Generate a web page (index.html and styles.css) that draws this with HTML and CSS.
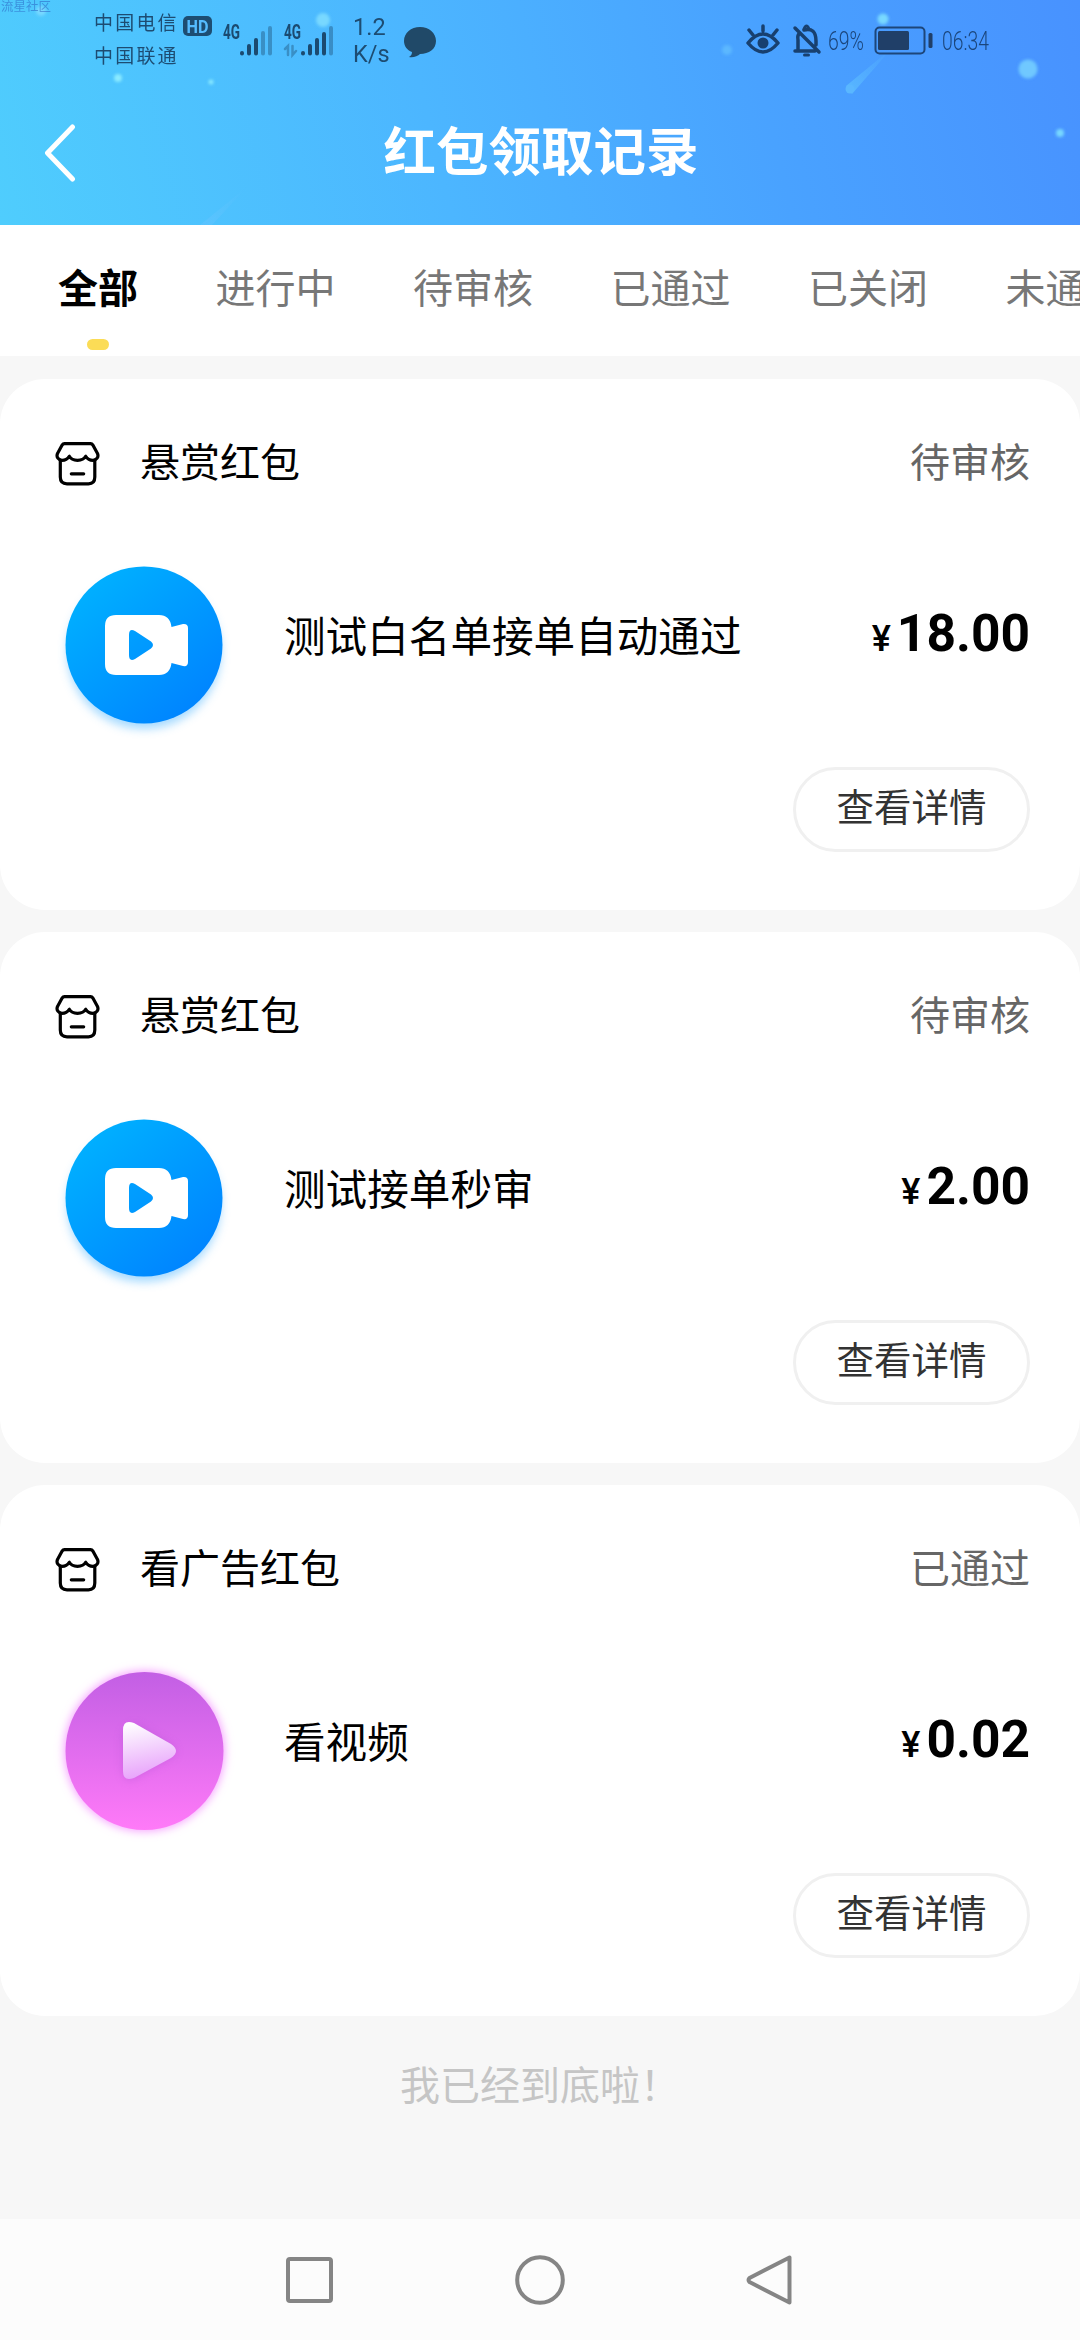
FILE: index.html
```html
<!DOCTYPE html>
<html lang="zh-CN">
<head>
<meta charset="utf-8">
<title>红包领取记录</title>
<link rel="stylesheet" href="styles.css">
</head>
<body>
<svg class="defs" width="0" height="0" aria-hidden="true">
  <defs>
    <linearGradient id="blue" x1="0.15" y1="0.1" x2="0.85" y2="0.9"><stop offset="0" stop-color="#00b0ff"/><stop offset="1" stop-color="#0084ff"/></linearGradient>
    <linearGradient id="pink" x1="0" y1="0" x2="0" y2="1"><stop offset="0" stop-color="#c25fe4"/><stop offset="1" stop-color="#ff7af8"/></linearGradient>
    <linearGradient id="play" x1="0.2" y1="0" x2="0.4" y2="1"><stop offset="0" stop-color="#fff"/><stop offset="1" stop-color="#e7a0fb"/></linearGradient>
    <filter id="soft" x="-30%" y="-30%" width="160%" height="160%"><feGaussianBlur stdDeviation="5"/></filter>
    <symbol id="shop" viewBox="0 0 44 44">
      <g fill="none" stroke="#000" stroke-width="3.2" stroke-linejoin="round" stroke-linecap="round">
        <path d="M9 1.600H35C36.500 1.600 37 2.500 37.500 3.300L42 11.500C43.500 15 41 18.300 37.500 18.300C34 18.300 32 17 30.200 14.300C28.500 17.300 25.500 18.300 22 18.300C18.500 18.300 15.500 17.300 13.800 14.300C12 17 10 18.300 6.500 18.300C3 18.300.5 15 2 11.500L6.500 3.300C7 2.500 7.500 1.600 9 1.600Z"/>
        <path d="M4.800 18V35C4.800 39.500 7.500 41.800 11.500 41.800H33C37 41.800 39.300 39.500 39.300 35V18M15.800 31.800H28.200"/>
      </g>
    </symbol>
    <symbol id="camera" viewBox="0 0 190 190">
      <circle cx="95" cy="100" r="77" fill="#4db5ff" opacity=".5" filter="url(#soft)"/>
      <circle cx="95" cy="93" r="78.500" fill="url(#blue)"/>
      <path fill="#fff" fill-rule="evenodd" d="M67 63H110Q121 63 122.500 75L134 72Q139 71.500 139 76V110Q139 115 134 114L122.500 111Q121 123 110 123H67Q56 123 56 112V74Q56 63 67 63ZM80 83V103Q80 110 86 107L102 96.500Q106 93 102 89.500L86 79Q80 76 80 83Z"/>
    </symbol>
    <symbol id="video" viewBox="0 0 190 190">
      <circle cx="95.500" cy="93" r="80" fill="#f69cff" filter="url(#soft)"/>
      <circle cx="95.500" cy="93" r="79" fill="url(#pink)"/>
      <path d="M74 74V112Q76 126 86 120L122 99Q130 93 122 87L86 66" fill="#a04bc8" opacity=".35" filter="url(#soft)"/>
      <path d="M74 72Q74 61 85 65L122 86Q132 93 122 100L85 120Q74 124 74 113Z" fill="url(#play)"/>
    </symbol>
  </defs>
</svg>
<div class="screen">
  <header class="header">
    <svg class="sparkles" viewBox="0 0 1080 225" aria-hidden="true">
      <defs>
        <linearGradient id="streak" x1="0" y1="1" x2="1" y2="0"><stop offset="0" stop-color="#60c4ff" stop-opacity=".7"/><stop offset="1" stop-color="#60c4ff" stop-opacity="0"/></linearGradient>
        <filter id="glow" x="-100%" y="-100%" width="300%" height="300%"><feGaussianBlur stdDeviation="1.500"/></filter>
      </defs>
      <g fill="#78d8ff" filter="url(#glow)">
        <circle cx="41" cy="11" r="5"/><circle cx="118" cy="78" r="4" fill="#8aeaff"/><circle cx="211" cy="82" r="2.500" fill="#8aeaff"/>
        <circle cx="323" cy="20" r="7"/><circle cx="883" cy="19" r="5.500"/><circle cx="727" cy="50" r="5" opacity=".4"/>
        <circle cx="1028" cy="69" r="9.500" fill="#6fc8ff"/><circle cx="1060" cy="133" r="4"/>
      </g>
      <path d="M846 86L892 48L852 94Z" fill="url(#streak)"/><circle cx="850" cy="89" r="4.500" fill="#5ab7ff"/>
      <path d="M200 225L248 186L212 225Z" fill="url(#streak)"/>
    </svg>
    <span class="watermark">流星社区</span>
    <div class="statusbar">
      <div class="carriers"><span>中国电信</span><span>中国联通</span></div>
      <svg class="network" width="156" height="50" viewBox="0 0 156 50">
        <rect x="0" y="5" width="29" height="20" rx="5" fill="#1d4d72"/>
        <text x="3.500" y="21.500" class="hd" textLength="22" lengthAdjust="spacingAndGlyphs">HD</text>
        <text x="40" y="28" class="gen" textLength="17" lengthAdjust="spacingAndGlyphs">4G</text>
        <text x="101" y="28" class="gen" textLength="17" lengthAdjust="spacingAndGlyphs">4G</text>
        <g stroke-width="4" stroke-linecap="round" stroke="#1b4a70">
          <path d="M59 42V42.500M66 35V42.500M73 29V42.500M120 42V42.500M127 35V42.500M134 29V42.500M141 23V42.500"/>
          <path stroke-opacity=".4" d="M80 22V42.500M87 17V42.500M148 17V42.500"/>
          <path stroke-width="2.500" fill="none" stroke-opacity=".4" d="M102 38L105 35V44M109.500 35V44L113 40"/>
        </g>
      </svg>
      <div class="speed"><span>1.2</span><span>K/s</span></div>
      <svg class="bubble" width="32" height="31" viewBox="0 0 32 31"><path fill="#204968" d="M16 0C25 0 32 6 32 14C32 22 25 27 16 27C14 29 9 31 5 30C7 29 8 27 8 25C3 23 0 19 0 14C0 6 7 0 16 0Z"/></svg>
      <svg class="system" width="248" height="34" viewBox="0 0 248 34">
        <g fill="none" stroke="#18406f" stroke-width="3.500" stroke-linecap="round" stroke-linejoin="round">
          <path d="M2 20Q17 2 32 20Q17 38 2 20ZM17 8V3M7 12L3 7M27 12L31 7"/><circle cx="17" cy="20" r="5.500" fill="#18406f" stroke="none"/>
          <path d="M49 5L73 29M49 28H69M52 26V17Q51 12 54 10M58 7Q70 4 70 18V22"/><path d="M58 6Q60.500 0 63 6" stroke-width="3"/><path d="M58.500 32H62.500" stroke-width="3"/>
        </g>
        <text x="82" y="27" class="hand" textLength="36" lengthAdjust="spacingAndGlyphs">69%</text>
        <rect x="129.500" y="4.500" width="49" height="26" rx="4" fill="none" stroke="#1d467a" stroke-width="2"/>
        <rect x="132" y="8" width="31" height="19" rx="1.500" fill="#203f68"/>
        <rect x="182.500" y="10" width="4" height="15" rx="1.500" fill="#203f68"/>
        <text x="196" y="27" class="hand" textLength="47" lengthAdjust="spacingAndGlyphs">06:34</text>
      </svg>
    </div>
    <div class="titlebar">
      <svg class="back" width="32" height="60" viewBox="0 0 32 60"><path d="M28.500 4L3.500 30L28.500 56" fill="none" stroke="#fff" stroke-width="5" stroke-linecap="round" stroke-linejoin="round"/></svg>
      <h1>红包领取记录</h1>
    </div>
  </header>

  <nav class="tabs">
    <a class="tab active">全部</a><a class="tab">进行中</a><a class="tab">待审核</a><a class="tab">已通过</a><a class="tab">已关闭</a><a class="tab">未通过</a>
  </nav>

  <main class="list">
    <section class="card">
      <div class="card-head"><svg class="shop"><use href="#shop"/></svg><h2>悬赏红包</h2><span class="state">待审核</span></div>
      <div class="card-body"><svg class="thumb"><use href="#camera"/></svg><p>测试白名单接单自动通过</p><div class="price"><span>¥</span>18.00</div></div>
      <button class="detail">查看详情</button>
    </section>
    <section class="card">
      <div class="card-head"><svg class="shop"><use href="#shop"/></svg><h2>悬赏红包</h2><span class="state">待审核</span></div>
      <div class="card-body"><svg class="thumb"><use href="#camera"/></svg><p>测试接单秒审</p><div class="price"><span>¥</span>2.00</div></div>
      <button class="detail">查看详情</button>
    </section>
    <section class="card">
      <div class="card-head"><svg class="shop"><use href="#shop"/></svg><h2>看广告红包</h2><span class="state">已通过</span></div>
      <div class="card-body"><svg class="thumb"><use href="#video"/></svg><p>看视频</p><div class="price"><span>¥</span>0.02</div></div>
      <button class="detail">查看详情</button>
    </section>
    <p class="end">我已经到底啦！</p>
  </main>

  <footer class="navbar">
    <svg width="52" height="52" viewBox="0 0 52 52"><rect x="4" y="5" width="43" height="42" rx="2"/></svg>
    <svg width="52" height="52" viewBox="0 0 52 52"><circle cx="26" cy="26" r="22.800"/></svg>
    <svg width="52" height="52" viewBox="0 0 52 52"><path d="M45.500 3.500V48.500L5.500 28Q3.500 26 5.500 24Z"/></svg>
  </footer>
</div>
</body>
</html>
```
FILE: styles.css
```css
* { box-sizing: border-box; }
body {
  margin: 0;
  font-family: Roboto, "Noto Sans CJK SC", sans-serif;
  color: #000;
  background: #f7f7f7;
}
h1, h2, p { margin: 0; font-weight: 400; }
.defs { position: absolute; }
.screen {
  width: 1080px;
  height: 2340px;
  display: flex;
  flex-direction: column;
  overflow: hidden;
}

/* header */
.header {
  position: relative;
  height: 225px;
  flex: none;
  background: linear-gradient(76deg, #4fcdfd 0%, #4cb6ff 40%, #49a2ff 70%, #4892ff 100%);
}
.sparkles { position: absolute; inset: 0; width: 1080px; height: 225px; }
.watermark {
  position: absolute;
  left: 1px;
  top: -1px;
  font-size: 12.5px;
  line-height: 15px;
  color: rgba(40, 90, 190, .5);
}
.statusbar {
  position: relative;
  height: 80px;
  display: flex;
  align-items: flex-start;
  padding: 7px 86px 0 94px;
  color: #1d4c72;
}
.carriers {
  width: 89px;
  display: flex;
  flex-direction: column;
  font-size: 19px;
  font-weight: 400;
  letter-spacing: 2.2px;
  line-height: 33px;
}
.network { margin-top: 4px; }
.hd { font: 700 18px Roboto, sans-serif; fill: #55bcff; }
.gen { font: 700 20px Roboto, sans-serif; fill: #1b4a70; }
.hand { font: 300 26px Roboto, sans-serif; fill: #1b467c; }
.speed {
  width: 51px;
  margin-left: 14px;
  display: flex;
  flex-direction: column;
  font-size: 23.5px;
  line-height: 27px;
  padding-top: 7px;
}
.bubble { margin-top: 20px; }
.system { margin-top: 16px; margin-left: auto; }
.titlebar {
  position: relative;
  height: 145px;
  display: flex;
  align-items: center;
  padding-left: 44px;
}
h1 {
  flex: 1;
  margin-right: 74px;
  text-align: center;
  font-size: 52.5px;
  line-height: 60px;
  font-weight: 700;
  color: #fff;
}

/* tabs */
.tabs {
  height: 131px;
  flex: none;
  display: flex;
  gap: 77.500px;
  padding: 35px 0 0 58px;
  background: #fff;
  white-space: nowrap;
}
.tab {
  flex: none;
  display: flex;
  flex-direction: column;
  align-items: center;
  font-size: 40px;
  line-height: 60px;
  color: #777;
}
.tab.active { font-weight: 700; color: #000; }
.tab.active::after {
  content: "";
  width: 22px;
  height: 11px;
  margin-top: 19px;
  border-radius: 6px;
  background: #fbdc56;
}

/* cards */
.list {
  flex: 1;
  display: flex;
  flex-direction: column;
  gap: 22px;
  padding-top: 23px;
}
.card {
  height: 531px;
  flex: none;
  padding: 55px 50px 0 55px;
  border-radius: 45px;
  background: #fff;
  display: flex;
  flex-direction: column;
}
.card-head { display: flex; align-items: center; height: 60px; }
.shop { width: 45px; height: 44px; }
h2 { margin-left: 40px; font-size: 40px; line-height: 60px; }
.state { margin-left: auto; font-size: 40px; line-height: 60px; color: #666; }
.card-body { display: flex; height: 190px; margin-top: 58px; }
.thumb { width: 190px; height: 190px; margin-left: -6px; }
.card-body p { margin-left: 45px; padding-top: 56px; font-size: 41.600px; line-height: 60px; }
.price {
  margin-left: auto;
  padding-top: 52px;
  font-size: 51.500px;
  line-height: 60px;
  font-weight: 700;
}
.price span { font-size: 36px; font-weight: 500; margin-right: 6px; }
.detail {
  align-self: flex-end;
  width: 237px;
  height: 85px;
  margin-top: 25px;
  padding: 0 0 4px;
  border: 3px solid #f0f0f0;
  border-radius: 43px;
  background: #fff;
  color: #333;
  font-family: inherit;
  font-size: 37.500px;
  line-height: 50px;
}
.end {
  margin-top: 19px;
  text-align: center;
  font-size: 40px;
  line-height: 60px;
  color: #c5c5c5;
}

/* system navigation */
.navbar {
  flex: none;
  height: 121px;
  display: flex;
  justify-content: center;
  align-items: center;
  gap: 178px;
  background: #fcfcfc;
}
.navbar svg { fill: none; stroke: #858585; stroke-width: 4; stroke-linejoin: round; }
```
